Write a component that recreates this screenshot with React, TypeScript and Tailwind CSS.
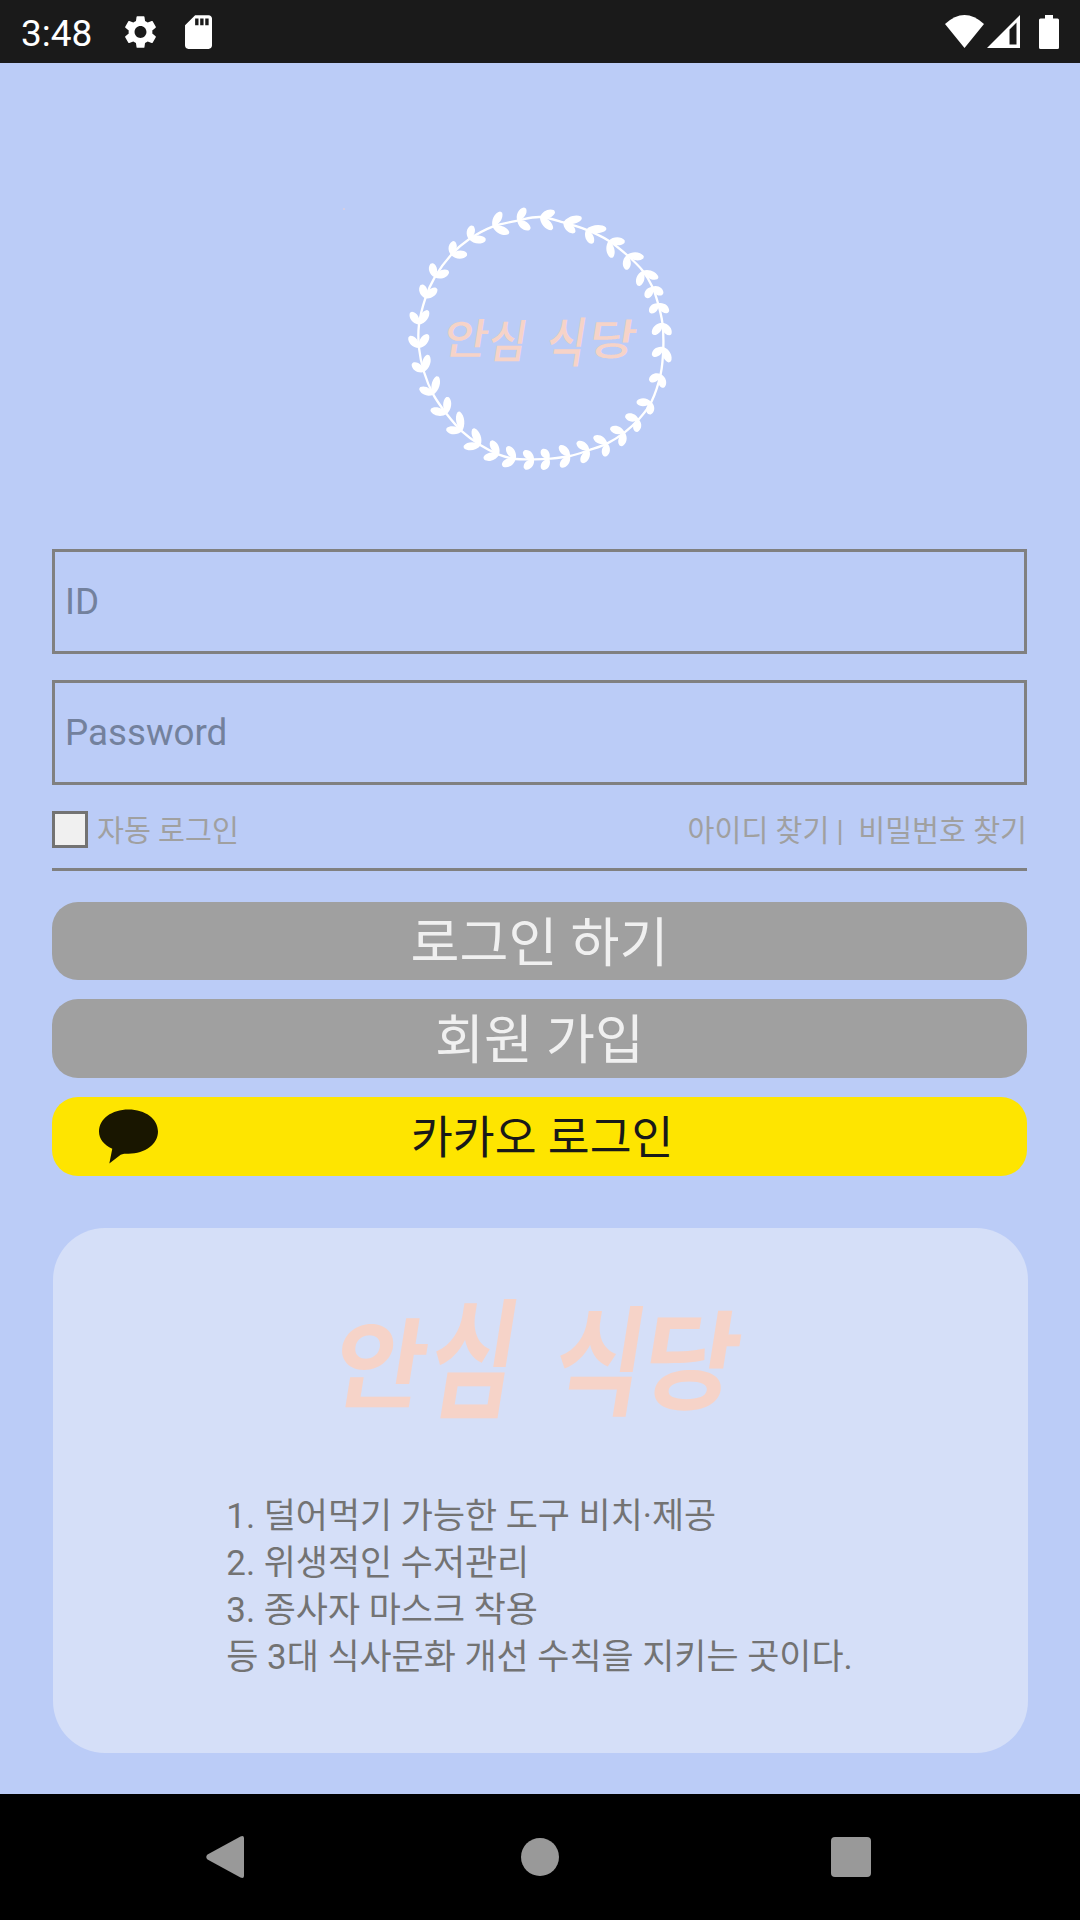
import React from "react";

type Pt = [number, number];
type Sprig = [Pt, Pt, Pt];

// Each sprig: point on the stem, followed by the tips of its two leaves.
const sprigs: Sprig[] = [
  [[352, 62], [376, 23], [391, 88]],
  [[278, 80], [304, 35], [328, 100]],
  [[207, 118], [217, 76], [258, 119]],
  [[153, 165], [162, 123], [202, 163]],
  [[104, 232], [95, 189], [147, 214]],
  [[76, 295], [65, 253], [111, 265]],
  [[57, 374], [32, 336], [85, 331]],
  [[57, 444], [27, 409], [85, 403]],
  [[72, 516], [36, 490], [85, 464]],
  [[100, 584], [58, 564], [113, 528]],
  [[140, 642], [91, 629], [143, 590]],
  [[186, 694], [138, 688], [176, 634]],
  [[242, 736], [190, 741], [219, 685]],
  [[297, 764], [250, 775], [273, 721]],
  [[347, 777], [306, 797], [321, 739]],
  [[402, 778], [373, 807], [370, 753]],
  [[448, 776], [426, 809], [425, 748]],
  [[510, 768], [482, 802], [478, 737]],
  [[568, 750], [545, 789], [530, 726]],
  [[622, 730], [614, 770], [580, 710]],
  [[674, 697], [662, 739], [630, 684]],
  [[716, 658], [708, 696], [675, 648]],
  [[754, 606], [748, 644], [709, 607]],
  [[782, 522], [790, 564], [748, 543]],
  [[790, 441], [810, 487], [757, 468]],
  [[787, 368], [812, 405], [758, 404]],
  [[774, 310], [806, 337], [750, 339]],
  [[757, 260], [789, 283], [738, 294]],
  [[728, 212], [775, 235], [715, 258]],
  [[681, 165], [732, 172], [680, 210]],
  [[626, 122], [675, 125], [636, 174]],
  [[558, 89], [620, 86], [578, 131]],
  [[490, 67], [546, 53], [525, 98]],
  [[420, 51], [465, 34], [458, 89]],
];

function leaf([bx, by]: Pt, [tx, ty]: Pt) {
  const dx = tx - bx;
  const dy = ty - by;
  const len = Math.hypot(dx, dy);
  const nx = (-dy / len) * 13;
  const ny = (dx / len) * 13;
  const p = (t: number, s: number) => `${bx + dx * t + nx * s} ${by + dy * t + ny * s}`;
  return `M${bx} ${by}C${p(0.25, 1.1)} ${p(0.75, 1.25)} ${p(0.97, 0.3)}Q${tx} ${ty} ${p(0.97, -0.3)}C${p(0.75, -1.25)} ${p(0.25, -1.1)} ${bx} ${by}Z`;
}

function stem(points: Pt[]) {
  const n = points.length;
  let d = `M${points[0].join(" ")}`;
  for (let i = 0; i < n; i++) {
    const a = points[(i + n - 1) % n];
    const b = points[i];
    const c = points[(i + 1) % n];
    const e = points[(i + 2) % n];
    d += `C${b[0] + (c[0] - a[0]) / 6} ${b[1] + (c[1] - a[1]) / 6} ${c[0] - (e[0] - b[0]) / 6} ${c[1] - (e[1] - b[1]) / 6} ${c[0]} ${c[1]}`;
  }
  return d + "Z";
}

type Syllable = { ch: string; x: number; y: number; w: number; h: number };

// Slanted syllables, each stretched to fill its own box.
function Lettering({ items, weight }: { items: Syllable[]; weight: number }) {
  return (
    <g fill="#f6d3c8" fontFamily="'Noto Sans CJK KR', sans-serif" fontWeight={weight} fontSize="100">
      {items.map(({ ch, x, y, w, h }) => (
        <text
          key={ch}
          x="-5"
          y="-8"
          transform={`translate(${x} ${y + h}) skewX(-9) scale(${(w - h * 0.15) / 83} ${h / 92})`}
        >
          {ch}
        </text>
      ))}
    </g>
  );
}

function Wreath() {
  return (
    <svg viewBox="0 0 840 840" className="size-[280px] overflow-visible">
      <path d={stem(sprigs.map((s) => s[0]))} fill="none" stroke="#fff" strokeWidth="7" />
      <g fill="#fff">
        {sprigs.map(([b, l, r], i) => (
          <path key={i} d={leaf(b, l) + leaf(b, r)} />
        ))}
      </g>
      <Lettering
        weight={500}
        items={[
          { ch: "안", x: 131, y: 356, w: 138, h: 116 },
          { ch: "심", x: 264, y: 360, w: 122, h: 126 },
          { ch: "식", x: 437, y: 350, w: 128, h: 148 },
          { ch: "당", x: 566, y: 358, w: 146, h: 118 },
        ]}
      />
    </svg>
  );
}

function Wordmark() {
  return (
    <svg viewBox="0 -20 440 210" className="-my-[20px] h-[210px] w-[440px] overflow-visible">
      <Lettering
        weight={700}
        items={[
          { ch: "안", x: 12, y: 48, w: 97, h: 90 },
          { ch: "심", x: 106, y: 28, w: 95, h: 120 },
          { ch: "식", x: 231, y: 36, w: 97, h: 110 },
          { ch: "당", x: 320, y: 41, w: 102, h: 99 },
        ]}
      />
    </svg>
  );
}

function StatusBar() {
  return (
    <header className="flex h-[63px] items-center justify-between bg-[#1a1a1a] pr-[21px] pl-[21px] text-white">
      <div className="flex items-center">
        <span className="w-[103px] pt-[3px] text-[37px] leading-none">3:48</span>
        <svg viewBox="2 2 20 20" className="h-[34px] w-[33px]" fill="currentColor">
          <path d="M19.14 12.94c.04-.3.06-.61.06-.94 0-.32-.02-.64-.07-.94l2.03-1.58c.18-.14.23-.41.12-.61l-1.92-3.32c-.12-.22-.37-.29-.59-.22l-2.39.96c-.5-.38-1.03-.7-1.62-.94l-.36-2.54c-.04-.24-.24-.41-.48-.41h-3.84c-.24 0-.43.17-.47.41l-.36 2.54c-.59.24-1.13.57-1.62.94l-2.39-.96c-.22-.08-.47 0-.59.22L2.74 8.87c-.12.21-.08.47.12.61l2.03 1.58c-.05.3-.09.63-.09.94s.02.64.07.94l-2.03 1.58c-.18.14-.23.41-.12.61l1.92 3.32c.12.22.37.29.59.22l2.39-.96c.5.38 1.03.7 1.62.94l.36 2.54c.05.24.24.41.48.41h3.84c.24 0 .44-.17.47-.41l.36-2.54c.59-.24 1.13-.56 1.62-.94l2.39.96c.22.08.47 0 .59-.22l1.92-3.32c.12-.22.07-.47-.12-.61l-2.01-1.58zM12 15.6c-1.98 0-3.6-1.62-3.6-3.6s1.62-3.6 3.6-3.6 3.6 1.62 3.6 3.6-1.62 3.6-3.6 3.6z" />
        </svg>
        <svg viewBox="4 2 16 20" className="ml-[28px] h-[34px] w-[27px]" fill="currentColor">
          <path d="M18 2h-8L4.02 8 4 20c0 1.100.9 2 2 2h12c1.100 0 2-.9 2-2V4c0-1.100-.9-2-2-2zm-6 6h-2V4h2v4zm3 0h-2V4h2v4zm3 0h-2V4h2v4z" />
        </svg>
      </div>
      <div className="flex items-center">
        <svg viewBox="0 0 39 33" className="h-[33px] w-[39px]" fill="currentColor">
          <path d="M0 9Q19.500-9 39 9L19.500 33Z" />
        </svg>
        <svg viewBox="0 0 33 33" className="ml-[3px] h-[33px] w-[33px]" fill="currentColor">
          <path fillRule="evenodd" d="M33 0V33H0ZM22.500 14.500V29.500H29.500V7.500Z" />
        </svg>
        <svg viewBox="0 0 20 34" className="ml-[19px] h-[34px] w-[20px]" fill="currentColor">
          <path d="M6 0h8v3.500h4.500Q20 3.500 20 5V32.500Q20 34 18.500 34H1.500Q0 34 0 32.500V5Q0 3.500 1.500 3.500H6Z" />
        </svg>
      </div>
    </header>
  );
}

function Field({ label }: { label: string }) {
  return (
    <div className="flex h-[105px] items-center border-[3px] border-[#808080] pl-[10px] text-[36.75px] text-[#73819d]">
      {label}
    </div>
  );
}

function NavBar() {
  return (
    <nav className="flex h-[126px] items-center bg-black pl-[206px] text-[#999]">
      <svg viewBox="0 0 38 42" className="h-[42px] w-[38px]" fill="currentColor">
        <path d="M1.500 18.500 34.500.4Q38-.8 38 2V40Q38 42.800 34.500 41.600L1.500 23.500Q-1 21 1.500 18.500Z" />
      </svg>
      <div className="ml-[277px] size-[38px] rounded-full bg-[#999]" />
      <div className="ml-[272px] size-[40px] rounded-[4px] bg-[#999]" />
    </nav>
  );
}

export default function App() {
  return (
    <div className="flex h-[1920px] w-[1080px] flex-col bg-[#bbccf7] font-[Roboto,'Noto_Sans_CJK_KR',sans-serif]">
      <StatusBar />
      <main className="relative flex flex-1 flex-col">
        <span className="absolute top-[145px] left-[343px] size-[2px] rounded-full bg-[#dccfdc]" />
        <div className="mt-[137px] flex justify-center">
          <Wreath />
        </div>

        <section className="mt-[69px] mr-[53px] ml-[52px] flex flex-col">
          <div className="flex flex-col gap-[26px]">
            <Field label="ID" />
            <Field label="Password" />
          </div>
          <div className="mt-[26px] flex h-[37px] items-center justify-between text-[29.250px] leading-none text-[#a0a0a0]">
            <div className="flex items-center">
              <div className="mr-[9px] h-[37px] w-[36px] border-[3px] border-[#737373] bg-[#f0f0f0]" />
              <span className="pt-[5px]">자동 로그인</span>
            </div>
            <span className="pt-[5px] whitespace-pre">아이디 찾기 |  비밀번호 찾기</span>
          </div>
          <div className="mt-[20px] h-[3px] bg-[#808080]" />

          <div className="mt-[31px] flex h-[78px] items-center justify-center rounded-[26px] bg-[#a0a0a0] pt-[8px] text-[53.200px] leading-none text-[#f0f0f0]">
            로그인 하기
          </div>
          <div className="mt-[19px] flex h-[79px] items-center justify-center rounded-[26px] bg-[#a0a0a0] pt-[6px] text-[53.200px] leading-none text-[#f0f0f0]">
            회원 가입
          </div>
          <div className="mt-[19px] flex h-[79px] items-center rounded-[26px] bg-[#fee500] text-[#191919]">
            <svg viewBox="0 0 60 55" className="ml-[47px] h-[55px] w-[59px]" fill="#191600">
              <path d="M30 0C47 0 60 9.500 60 22.500S47 45 30 45C27 45 24 45 22 46L10.500 55 13.500 40C5 36 0 30 0 22.500 0 9.500 13 0 30 0Z" />
            </svg>
            <span className="ml-[253px] pt-[4px] text-[45.500px] leading-none">카카오 로그인</span>
          </div>
        </section>

        <section className="mt-[52px] mr-[52px] ml-[53px] flex h-[525px] flex-col items-center rounded-[52px] bg-[#d5dff8] pt-[42px]">
          <Wordmark />
          <div className="mt-[53px] mr-[2px] text-[34.900px] leading-[47px] whitespace-nowrap text-[#737373]">
            <p>1. 덜어먹기 가능한 도구 비치·제공</p>
            <p>2. 위생적인 수저관리</p>
            <p>3. 종사자 마스크 착용</p>
            <p>등 3대 식사문화 개선 수칙을 지키는 곳이다.</p>
          </div>
        </section>
      </main>
      <NavBar />
    </div>
  );
}
